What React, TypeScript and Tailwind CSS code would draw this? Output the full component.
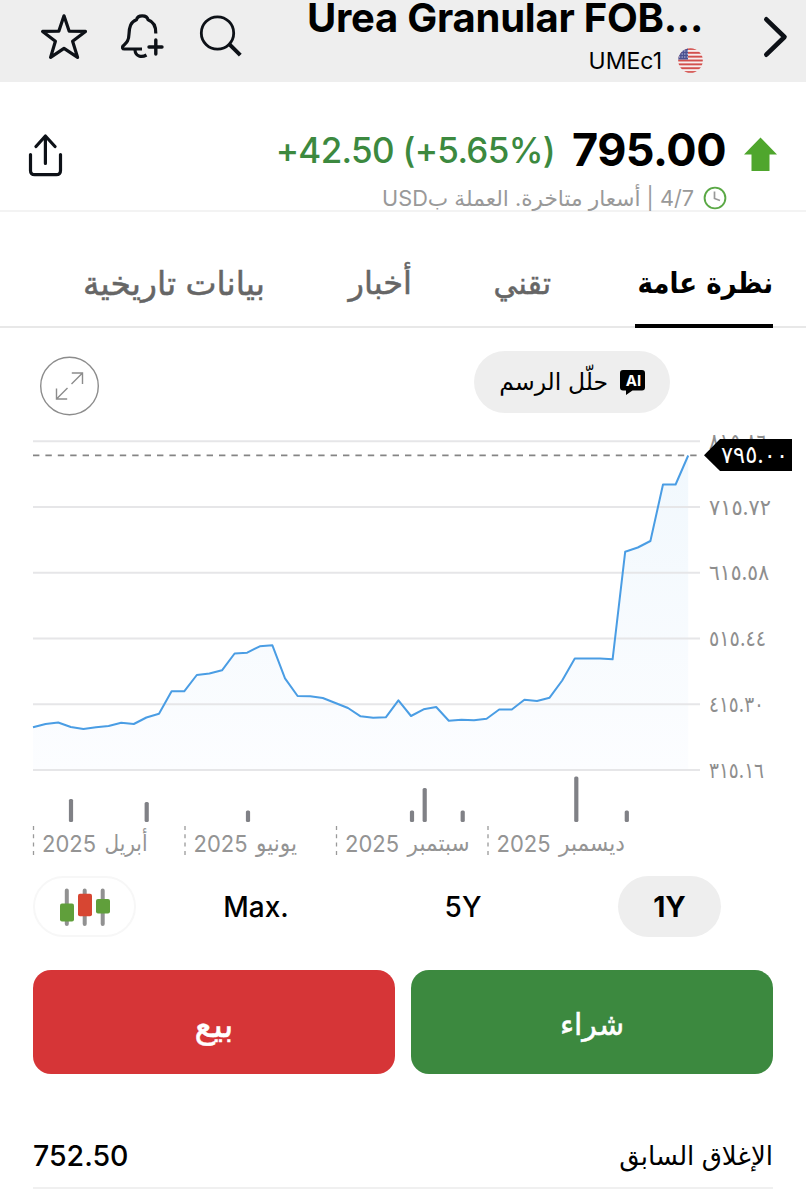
import type { ReactNode } from 'react';

// チャートの終値（SVG座標のY値、等間隔）
const PRICE_Y = [
  727.3, 724, 722.5, 727, 729, 727.3, 726, 722.7, 724, 717.5, 713.7, 691.3, 691.3, 675, 673.5, 670.3,
  653.5, 652.7, 646.3, 645.3, 678.3, 696, 696.3, 698, 703, 708, 716.3, 717.7, 717.3, 700.3, 716, 709.3,
  707, 720.7, 719.7, 720.3, 718.7, 709.5, 709.5, 699.7, 701, 697.7, 680.5, 658.5, 658.5, 658.5, 659.3,
  551.7, 547.5, 541, 484.5, 484.5, 455.5,
];

const GRID = [
  { y: 441.3, label: '٨١٥.٨٦', width: 58 },
  { y: 507, label: '٧١٥.٧٢', width: 62 },
  { y: 572.8, label: '٦١٥.٥٨', width: 60 },
  { y: 638.5, label: '٥١٥.٤٤', width: 57 },
  { y: 704.2, label: '٤١٥.٣٠', width: 55 },
  { y: 770, label: '٣١٥.١٦', width: 55 },
];

const VOLUMES = [
  { x: 71, top: 799 },
  { x: 146.7, top: 802 },
  { x: 248, top: 810.5 },
  { x: 412, top: 810.5 },
  { x: 424.7, top: 788 },
  { x: 462.7, top: 810.5 },
  { x: 576.3, top: 776.5 },
  { x: 626.8, top: 810.5 },
];

const MONTHS = [
  { x: 33.5, name: 'أبريل', width: 43 },
  { x: 185, name: 'يونيو', width: 41 },
  { x: 336.5, name: 'سبتمبر', width: 62 },
  { x: 488, name: 'ديسمبر', width: 66 },
];

const linePoints = PRICE_Y.map((y, i) => `${(33 + i * 12.6).toFixed(1)},${y}`).join(' ');

function Header() {
  return (
    <header className="flex h-[82px] shrink-0 bg-[#eeeeee]">
      <svg width="270" height="82" fill="none" stroke="#0d1117" strokeWidth="3.2" strokeLinecap="round" strokeLinejoin="round">
        {/* お気に入り */}
        <path d="M64 15.8 L69.2 31.2 L85.5 31.4 L72.6 41.2 L77.6 57.4 L64 48.4 L50.6 57.4 L55.4 41.2 L42.6 31.4 L58.8 31.2 Z" />
        {/* アラート追加 */}
        <path d="M155.8 33.5 C156 26 154 21.8 148 19.8 C147 14.5 137.5 14.5 136.5 19.8 C130.5 22 129.3 27 129 34 C128.8 41.5 126 43 123 46 C122 47.5 122.5 49 124.3 49 L142 49" strokeLinecap="butt" />
        <path d="M135 50 C135.5 56.5 141.5 57.8 146.5 55" strokeLinecap="butt" />
        <path d="M155.8 40 V54 M149 47 H162" strokeWidth="3.4" />
        {/* 検索 */}
        <circle cx="217.5" cy="33" r="16.2" strokeWidth="2.8" />
        <path d="M229.5 44.3 L240.3 55.2" strokeWidth="4" strokeLinecap="butt" />
      </svg>
      <div className="flex w-[433px] flex-col items-end">
        <h1 className="h-9 whitespace-nowrap text-[40px] leading-9 font-bold tracking-[-0.25px] text-black">Urea Granular FOB...</h1>
        <div className="flex h-[50px] items-center gap-4">
          <span className="pt-[3px] text-[23px] leading-7 text-black">UMEc1</span>
          <svg className="mt-[3px]" width="25" height="25" viewBox="0 0 25 25">
            <clipPath id="flag">
              <circle cx="12.5" cy="12.5" r="12.3" />
            </clipPath>
            <g clipPath="url(#flag)">
              <rect width="25" height="25" fill="#f7eeee" />
              {[0, 1, 2, 3, 4, 5, 6].map(i => (
                <rect key={i} y={i * 3.85} width="25" height="1.92" fill="#d2504d" />
              ))}
              <rect width="10" height="11.5" fill="#4a5192" />
              <path d="M1 3h9M1 6h9M1 9h9" stroke="#d5d7ea" strokeWidth="1" strokeDasharray="1.2 1.4" />
            </g>
          </svg>
        </div>
      </div>
      <svg width="103" height="82" viewBox="703 0 103 82" fill="none">
        <path d="M766.3 19.3 L784.5 37 L766.3 54.7" stroke="#0d1117" strokeWidth="4.6" strokeLinecap="round" strokeLinejoin="round" />
      </svg>
    </header>
  );
}

function Quote() {
  return (
    <section className="flex h-[130px] shrink-0 justify-between border-b-2 border-[#f3f3f3] pl-7">
      <svg className="mt-[52px]" width="36" height="44" viewBox="28 134 36 44" fill="none" stroke="#0d1117" strokeWidth="3.2" strokeLinecap="round" strokeLinejoin="round">
        <path d="M45.4 163.5 V136.5 M36 146.5 L45.4 136 L55 146.5" />
        <path d="M30.5 154.5 V170.5 Q30.5 174.7 34.7 174.7 H56.3 Q60.5 174.7 60.5 170.5 V154.5" />
      </svg>
      <div className="flex pt-[39px]">
        <div className="flex flex-col items-end">
          <div className="flex items-center gap-[17px] leading-[56px]">
            <span className="pt-px text-[35px] font-medium tracking-[-0.7px] text-[#3c893f]">+42.50 (+5.65%)</span>
            <span className="text-[45px] font-bold tracking-[-0.5px] text-black">795.00</span>
          </div>
          <div className="-mr-[1px] flex items-center gap-[9px] pt-1">
            <span dir="rtl" className="text-[21.7px] leading-8 whitespace-nowrap text-[#999999]">4/7 | أسعار متاخرة. العملة بUSD</span>
            <svg width="24" height="24" viewBox="0 0 24 24" fill="none">
              <circle cx="12" cy="12" r="10.4" stroke="#5aa845" strokeWidth="1.9" />
              <path d="M11.5 5.5 V12.5 L17 14.5" stroke="#999" strokeWidth="1.7" />
            </svg>
          </div>
        </div>
        <svg className="ml-[17px]" width="63" height="56" viewBox="743 121 63 56">
          <path d="M760.5 137.5 L777 154.5 H769.5 V171 H751.5 V154.5 H744 Z" fill="#4fa62d" />
        </svg>
      </div>
    </section>
  );
}

function Tabs() {
  return (
    <nav dir="rtl" className="flex h-[116px] shrink-0 border-b-2 border-[#e8e8e8] pt-[51px] pr-[33px] text-[32px] leading-10 text-[#666666]">
      <div className="relative w-[138px] font-['DejaVu_Sans_Condensed','DejaVu_Sans',sans-serif] text-[29px] font-bold whitespace-nowrap text-black">
        نظرة عامة
        <div className="absolute right-0 -bottom-0.5 h-1 w-[138px] bg-black" />
      </div>
      <div className="mr-[84px] w-[55px] text-[30px] whitespace-nowrap [-webkit-text-stroke:0.5px]">تقني</div>
      <div className="mr-[84px] w-[64px] whitespace-nowrap [-webkit-text-stroke:0.5px]">أخبار</div>
      <div className="mr-[83px] w-[182px] text-[33px] whitespace-nowrap [-webkit-text-stroke:0.5px]">بيانات تاريخية</div>
    </nav>
  );
}

function Toolbar() {
  return (
    <div className="flex h-[97px] shrink-0 items-start justify-between pt-[23px] pr-[136px] pl-10">
      <svg className="mt-[5px]" width="60" height="60" viewBox="0 0 60 60" fill="none" stroke="#8c8c8c" strokeWidth="1.4">
        <circle cx="29.5" cy="30" r="28.8" />
        <path d="M31.5 28 L42.5 17 M31.8 17 H42.5 V28 M27.5 32 L16.5 43 M16.5 32.5 V43 H27.2" />
      </svg>
      <button dir="rtl" className="flex h-[62px] w-[196px] items-center gap-3 rounded-full bg-[#eeeeee] pr-[24px] text-[23.5px] whitespace-nowrap text-black">
        <span className="relative flex h-[25px] w-[26px] shrink-0 justify-center">
          <svg className="absolute inset-0" width="26" height="25" viewBox="0 0 26 25">
            <path d="M3 0 H22 Q25 0 25 3 V17.5 Q25 20.5 22 20.5 H12.5 L6 25 V20.5 H3 Q0 20.5 0 17.5 V3 Q0 0 3 0 Z" fill="#000" />
          </svg>
          <span className="relative pl-px text-[15px] leading-[21px] font-bold text-white">AI</span>
        </span>
        <span>حلّل الرسم</span>
      </button>
    </div>
  );
}

function Chart() {
  return (
    <svg className="h-[441px] shrink-0" width="806" height="441" viewBox="0 425 806 441">
      <defs>
        <linearGradient id="area" x1="0" y1="0" x2="0" y2="1">
          <stop offset="0" stopColor="#f1f8fd" />
          <stop offset="1" stopColor="#fcfdff" />
        </linearGradient>
      </defs>
      <polygon points={`33,770 ${linePoints} 688.2,770`} fill="url(#area)" />
      {GRID.map(({ y, label, width }) => (
        <g key={y}>
          <line x1="33" x2="700" y1={y} y2={y} stroke="#e6e6e8" strokeWidth="2" />
          <text x="709" y={y + 7.5} fontSize="22" fill="#8e8e8e" textLength={width} lengthAdjust="spacingAndGlyphs">{label}</text>
        </g>
      ))}
      <line x1="33" x2="697" y1="455.3" y2="455.3" stroke="#858585" strokeWidth="1.8" strokeDasharray="6.4 6" />
      <polyline points={linePoints} fill="none" stroke="#4a9de4" strokeWidth="2" strokeLinejoin="round" />

      {/* 現在値 */}
      <path d="M704 455.3 L720 439 H792 V471 H720 Z" fill="#000" />
      <text x="721" y="463" fontSize="24" fill="#fff" textLength="67" lengthAdjust="spacingAndGlyphs">٧٩٥.٠٠</text>

      {/* 出来高 */}
      {VOLUMES.map(({ x, top }) => (
        <rect key={x} x={x - 2.1} y={top} width="4.2" height={822 - top} rx="1.5" fill="#808186" />
      ))}

      {MONTHS.map(({ x, name, width }) => (
        <g key={x} fontSize="23.5" fill="#949494">
          <line x1={x} x2={x} y1="826" y2="855" stroke="#9a9a9a" strokeWidth="1.3" strokeDasharray="4 4.3" />
          <text x={x + 8.5} y="852" textLength="54" lengthAdjust="spacingAndGlyphs">2025</text>
          <text x={x + 71} y="851" fontSize="23" textLength={width} lengthAdjust="spacingAndGlyphs">{name}</text>
        </g>
      ))}
    </svg>
  );
}

function Ranges() {
  return (
    <div className="flex h-[61px] shrink-0 items-center pl-[33px] text-[28px] font-medium text-black">
      <button className="flex h-[61px] w-[103px] items-center justify-center rounded-full border-2 border-[#f7f7f7]">
        <svg width="52" height="38" viewBox="59 887 52 38">
          <path d="M66.8 889.5 V923 M84.7 889.5 V923 M102.7 889.5 V923" stroke="#919191" strokeWidth="4" strokeLinecap="round" />
          <rect x="60" y="902.5" width="14" height="18" rx="2" fill="#609f3b" />
          <rect x="78" y="892.8" width="14" height="22.5" rx="2" fill="#d74632" />
          <rect x="96" y="898" width="14" height="14.5" rx="2" fill="#609f3b" />
        </svg>
      </button>
      <button className="ml-[68px] w-[104px]">Max.</button>
      <button className="ml-[103px] w-[104px]">5Y</button>
      <button className="ml-[103px] h-[61px] w-[103px] rounded-full bg-[#eeeeee] font-bold">1Y</button>
    </div>
  );
}

function TradeButton({ className, children }: { className: string; children: ReactNode }) {
  return (
    <button className={`h-[104px] w-[362px] rounded-[18px] pt-1 text-white [-webkit-text-stroke:0.5px] ${className}`}>
      {children}
    </button>
  );
}

export default function App() {
  return (
    <div className="flex h-[1200px] w-[806px] flex-col overflow-hidden bg-white font-['Inter','DejaVu_Sans',sans-serif]">
      <Header />
      <Quote />
      <Tabs />
      <Toolbar />
      <Chart />
      <div className="h-2.5 shrink-0" />
      <Ranges />
      <div className="mt-[33px] flex shrink-0 gap-4 pl-[33px]">
        <TradeButton className="bg-[#d63537] text-[35px]">بيع</TradeButton>
        <TradeButton className="bg-[#3c893f] text-[30px]">شراء</TradeButton>
      </div>
      <div className="mx-[33px] mt-[62px] flex h-[53px] shrink-0 items-start justify-between border-b-2 border-[#f0f0f0] text-[28.5px] leading-[40px] text-black">
        <span className="font-medium">752.50</span>
        <span dir="rtl" className="text-[26px]">الإغلاق السابق</span>
      </div>
    </div>
  );
}
